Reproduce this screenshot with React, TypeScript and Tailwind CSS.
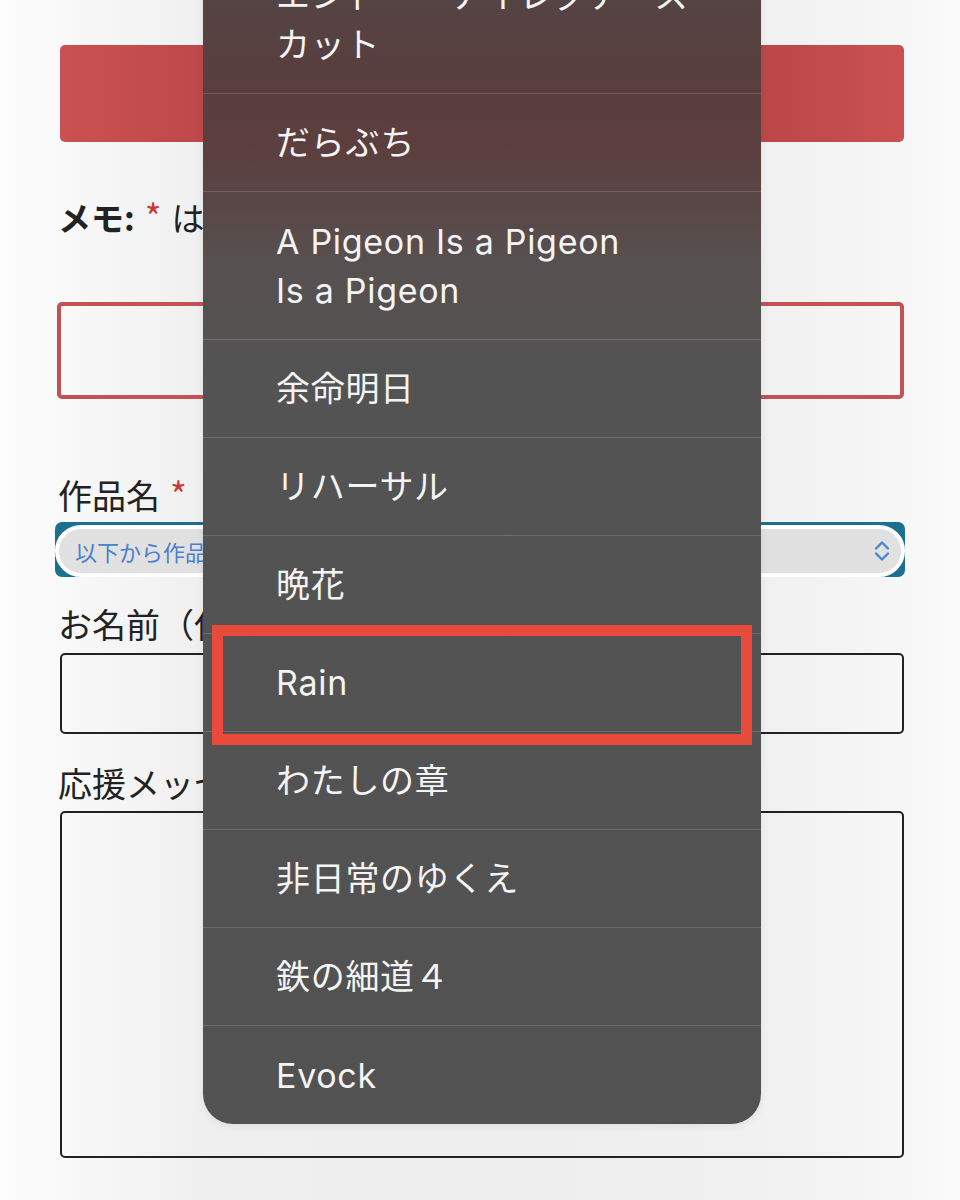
import React from 'react';

interface PickerOption {
  lines: string[];
}

const options: PickerOption[] = [
  { lines: ['エンドー・ナイレグアース', 'カット'] },
  { lines: ['だらぶち'] },
  { lines: ['A Pigeon Is a Pigeon', 'Is a Pigeon'] },
  { lines: ['余命明日'] },
  { lines: ['リハーサル'] },
  { lines: ['晩花'] },
  { lines: ['Rain'] },
  { lines: ['わたしの章'] },
  { lines: ['非日常のゆくえ'] },
  { lines: ['鉄の細道４'] },
  { lines: ['Evock'] },
];

const font = { fontFamily: '"Noto Sans CJK JP", "Noto Sans", sans-serif' };
const menuFont = { fontFamily: 'Inter, "Noto Sans CJK JP", sans-serif' };

const UpDownChevron: React.FC = () => (
  <svg width="18" height="24" viewBox="0 0 18 24" fill="none" stroke="#4a86d6" strokeWidth="2.4" strokeLinecap="round" strokeLinejoin="round">
    <path d="M3 9.5 L9 3.5 L15 9.5" />
    <path d="M3 14.5 L9 20.5 L15 14.5" />
  </svg>
);

const App: React.FC = () => {
  return (
    <div
      className="relative w-[960px] h-[1200px] overflow-hidden bg-[linear-gradient(to_right,#fdfdfd_0%,#efefef_22%,#eeeeee_55%,#f2f2f2_85%,#fafafa_100%)] text-[#222]"
      style={font}
    >
      {/* form underneath */}
      <div className="flex flex-col">
        <div className="mt-[45px] ml-[60px] w-[844px] h-[97px] rounded-[5px] bg-[linear-gradient(to_right,#ca5152_0%,#b54343_30%,#b04040_70%,#c95152_100%)]" />

        <div className="mt-[49px] ml-[58px] h-[48px] leading-[48px] text-[33px] whitespace-nowrap">
          <span className="font-bold">メモ:</span>
          <span className="text-[#c83a3a] text-[36px] ml-[10px]">*</span>
          <span className="ml-[10px]">は必須項目です</span>
        </div>

        <div className="mt-[63px] ml-[57px] w-[847px] h-[97px] rounded-[5px] border-4 border-[#c25253]" />

        <div className="mt-[70px] ml-[58px] h-[48px] leading-[48px] text-[34px] whitespace-nowrap">
          作品名<span className="text-[#c83a3a] text-[36px] ml-[10px]">*</span>
        </div>

        <div className="mt-[5px] ml-[55px] w-[850px] h-[55px] rounded-[7px] bg-[#1b6f8f] pt-[3px]">
          <div className="h-[52px] rounded-full border-4 border-white bg-[#e1e1e1] flex items-center justify-between pl-[16px] pr-[10px]">
            <span className="text-[22px] text-[#4a80cc] whitespace-nowrap">以下から作品を選択してください</span>
            <UpDownChevron />
          </div>
        </div>

        <div className="mt-[23px] ml-[58px] h-[48px] leading-[48px] text-[34px] whitespace-nowrap">お名前（任意）</div>

        <div className="mt-[5px] ml-[60px] w-[844px] h-[81px] rounded-[5px] border-2 border-[#222]" />

        <div className="mt-[25px] ml-[58px] h-[48px] leading-[48px] text-[34px] whitespace-nowrap">応援メッセージ</div>

        <div className="mt-[4px] ml-[60px] w-[844px] h-[347px] rounded-[5px] border-2 border-[#222]" />
      </div>

      {/* iOS picker menu */}
      <div
        className="absolute left-[203px] top-[-54px] w-[558px] rounded-b-[30px] overflow-hidden shadow-[0_2px_8px_rgba(0,0,0,0.08)] bg-[linear-gradient(to_bottom,#524848_0%,#583f3f_10%,#5c3e3e_17%,#575050_27%,#535353_37%,#525252_100%)]"
        style={menuFont}
      >
        {options.map((opt, i) => (
          <div
            key={i}
            className={
              'flex flex-col justify-center pl-[73px] text-[34px] leading-[49px] tracking-[0.7px] text-[#f4f4f4] ' +
              (opt.lines.length > 1 ? 'h-[148px] ' : 'h-[98px] ') +
              (i < options.length - 1 ? 'border-b border-white/15' : '')
            }
          >
            {opt.lines.map(line => (
              <div key={line} className="whitespace-nowrap">{line}</div>
            ))}
          </div>
        ))}
      </div>

      {/* highlight around the chosen option */}
      <div className="absolute left-[212px] top-[625px] w-[540px] h-[120px] border-[11px] border-[#e84a3c]" />
    </div>
  );
};

export default App;
